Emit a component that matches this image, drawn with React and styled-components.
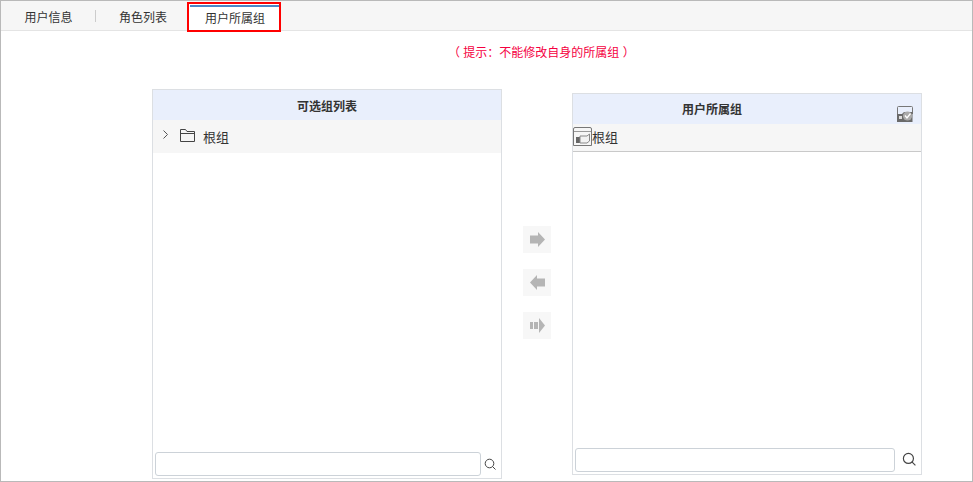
import React from "react";
import styled, { createGlobalStyle } from "styled-components";

const Global = createGlobalStyle`
  html, body { margin: 0; padding: 0; background: #fff; }
  body { font-family: "Liberation Sans", "Noto Sans CJK SC", sans-serif; font-size: 12px; color: #333; }
`;

const Frame = styled.div`
  width: 973px;
  height: 482px;
  box-sizing: border-box;
  border: 1px solid #b9b9b9;
  overflow: hidden;
  background: #fff;
`;

const TabBar = styled.div`
  height: 30px;
  box-sizing: border-box;
  display: flex;
  align-items: stretch;
  background: #f6f6f6;
  border-bottom: 1px solid #e4e4e4;
`;

const Tab = styled.div`
  width: ${(p) => p.$w}px;
  padding: 2px 0 0 1px;
  display: flex;
  align-items: center;
  justify-content: center;
  box-sizing: border-box;
  font-size: 12px;
  color: #333;
`;

const ActiveTab = styled(Tab)`
  position: relative;
  margin-top: 3px;
  padding: 1px 0 0 2px;
  background: #fff;
  outline: 2px solid #f00;

  &::before {
    content: "";
    position: absolute;
    left: 1px;
    right: 0;
    top: 1px;
    height: 2px;
    background: #4a86c5;
  }
`;

const TabDivider = styled.div`
  width: 1px;
  height: 12px;
  align-self: center;
  margin-top: 1px;
  background: #ccc;
`;

const Notice = styled.div`
  height: 42px;
  padding: 1px 0 0 447px;
  box-sizing: border-box;
  line-height: 42px;
  color: #f5003f;
  font-size: 12px;
`;

const Body = styled.div`
  display: flex;
  align-items: flex-start;
  padding-left: 151px;
  margin-top: 16px;
`;

const Panel = styled.div`
  width: 350px;
  height: ${(p) => p.$h}px;
  margin-top: ${(p) => p.$mt || 0}px;
  box-sizing: border-box;
  border: 1px solid #dcdfe3;
  display: flex;
  flex-direction: column;
`;

const PanelHead = styled.div`
  position: relative;
  height: 30px;
  flex: none;
  display: flex;
  align-items: center;
  justify-content: center;
  box-sizing: border-box;
  background: #e9effc;
  font-weight: bold;
  font-size: 12px;
  color: #333;
  padding-right: ${(p) => p.$pr || 0}px;
  padding-bottom: ${(p) => p.$pb || 0}px;
`;

const HeadIcon = styled.span`
  position: absolute;
  right: 8px;
  top: 12px;
  display: flex;
`;

const TreeRow = styled.div`
  height: 33px;
  flex: none;
  display: flex;
  align-items: center;
  background: #f6f6f6;
  color: #333;
  font-size: 13px;
  padding-left: 9px;
`;

const TreeLabel = styled.span`
  margin-left: 8px;
`;

const FolderWrap = styled.span`
  display: flex;
  margin-left: 11px;
  margin-top: -3px;
`;

const ChevronWrap = styled.span`
  display: flex;
  margin-top: -5px;
`;

const SelectedRow = styled.div`
  height: 28px;
  flex: none;
  box-sizing: border-box;
  display: flex;
  align-items: center;
  padding-bottom: 2px;
  background: #f6f6f6;
  border-bottom: 1px solid #c9c9c9;
  font-size: 13px;
  color: #333;
`;

const PanelFill = styled.div`
  flex: 1;
`;

const SearchRow = styled.div`
  height: 26px;
  flex: none;
  display: flex;
  align-items: flex-start;
  padding-left: 2px;
`;

const SearchInput = styled.input`
  width: ${(p) => p.$w}px;
  height: 24px;
  box-sizing: border-box;
  border: 1px solid #ccd2d8;
  border-radius: 3px;
  background: #fff;
  outline: none;
  padding: 0 4px;
`;

const SearchIcon = styled.span`
  display: flex;
  margin-left: ${(p) => p.$ml}px;
  margin-top: ${(p) => p.$mt}px;
`;

const Mover = styled.div`
  width: 70px;
  flex: none;
  display: flex;
  flex-direction: column;
  align-items: center;
  gap: 16px;
  padding-top: 137px;
`;

const MoveButton = styled.button`
  width: 28px;
  height: 27px;
  padding: 0;
  border: none;
  background: #f7f7f7;
  display: flex;
  align-items: center;
  justify-content: center;
`;

const Chevron = () => (
  <svg width="7" height="9" viewBox="0 0 7 9" fill="none" stroke="#555" strokeWidth="1">
    <path d="M1.5 .5 L5.5 4.5 L1.5 8.5" />
  </svg>
);

const Folder = () => (
  <svg width="15" height="13" viewBox="0 0 15 13" fill="none" stroke="#444" strokeWidth="1">
    <path d="M.5 12.5 V.5 H5.5 L7 2.5 H14.5 V12.5 Z M.5 4.5 H14.5" />
  </svg>
);

const Magnifier = ({ size }) => (
  <svg width={size} height={size} viewBox="0 0 12 12" fill="none" stroke="#444" strokeWidth="1">
    <circle cx="5.5" cy="5.5" r="4.3" />
    <path d="M8.5 8.5 L11.5 11.5" />
  </svg>
);

const RoleIcon = () => (
  <svg width="16" height="16" viewBox="0 0 16 16" fill="none">
    <path d="M.5 8 V1.5 Q.5 .5 1.5 .5 H14.5 Q15.5 .5 15.5 1.5 V8" stroke="#777" />
    <path d="M0 8 H5 L7 6 H15.5 V16 H0 Z" fill="#6a6a6a" />
    <circle cx="10.5" cy="10" r="4.6" fill="#aaa" />
    <path d="M8 9.5 L10 12 L13.5 7.5" stroke="#fff" strokeWidth="1.3" />
    <rect x="2" y="10" width="3" height="3" fill="#ddd" />
  </svg>
);

const GroupIcon = () => (
  <svg width="19" height="19" viewBox="0 0 19 19" fill="none">
    <path d="M.5 18.5 V2 Q.5 .5 2 .5 H17 Q18.5 .5 18.5 2 V18.5 Z" stroke="#777" />
    <path d="M1 4.5 H18" stroke="#999" />
    <rect x="3" y="10" width="5" height="6" fill="#666" />
    <path d="M7 16 V9 H14 L16.5 7 V14 L14 16 Z" fill="#f2f2f2" stroke="#888" />
  </svg>
);

const ArrowRight = () => (
  <svg width="15" height="15" viewBox="0 0 15 15">
    <path d="M0 3.5 H8 V0 L15 7.5 L8 15 V11.5 H0 Z" fill="#b5b5b5" />
  </svg>
);

const ArrowLeft = () => (
  <svg width="15" height="15" viewBox="0 0 15 15">
    <path d="M15 3.5 H7 V0 L0 7.5 L7 15 V11.5 H15 Z" fill="#b5b5b5" />
  </svg>
);

const ArrowAll = () => (
  <svg width="15" height="15" viewBox="0 0 15 15">
    <path d="M0 4 H3 V11 H0 Z M4 4 H8 V11 H4 Z M9 0 L15 7.5 L9 15 Z" fill="#b5b5b5" />
  </svg>
);

export default function App() {
  return (
    <>
      <Global />
      <Frame>
        <TabBar>
          <Tab $w={94}>用户信息</Tab>
          <TabDivider />
          <Tab $w={93}>角色列表</Tab>
          <ActiveTab $w={90}>用户所属组</ActiveTab>
        </TabBar>
        <Notice>（ 提示：不能修改自身的所属组 ）</Notice>
        <Body>
          <Panel $h={390}>
            <PanelHead>可选组列表</PanelHead>
            <TreeRow>
              <ChevronWrap><Chevron /></ChevronWrap>
              <FolderWrap><Folder /></FolderWrap>
              <TreeLabel>根组</TreeLabel>
            </TreeRow>
            <PanelFill />
            <SearchRow>
              <SearchInput $w={326} />
              <SearchIcon $ml={3} $mt={6}><Magnifier size={12} /></SearchIcon>
            </SearchRow>
          </Panel>
          <Mover>
            <MoveButton><ArrowRight /></MoveButton>
            <MoveButton><ArrowLeft /></MoveButton>
            <MoveButton><ArrowAll /></MoveButton>
          </Mover>
          <Panel $h={382} $mt={4}>
            <PanelHead $pr={70} $pb={2}>
              用户所属组
              <HeadIcon><RoleIcon /></HeadIcon>
            </PanelHead>
            <SelectedRow>
              <GroupIcon />
              根组
            </SelectedRow>
            <PanelFill />
            <SearchRow>
              <SearchInput $w={320} />
              <SearchIcon $ml={7} $mt={4}><Magnifier size={14} /></SearchIcon>
            </SearchRow>
          </Panel>
        </Body>
      </Frame>
    </>
  );
}
